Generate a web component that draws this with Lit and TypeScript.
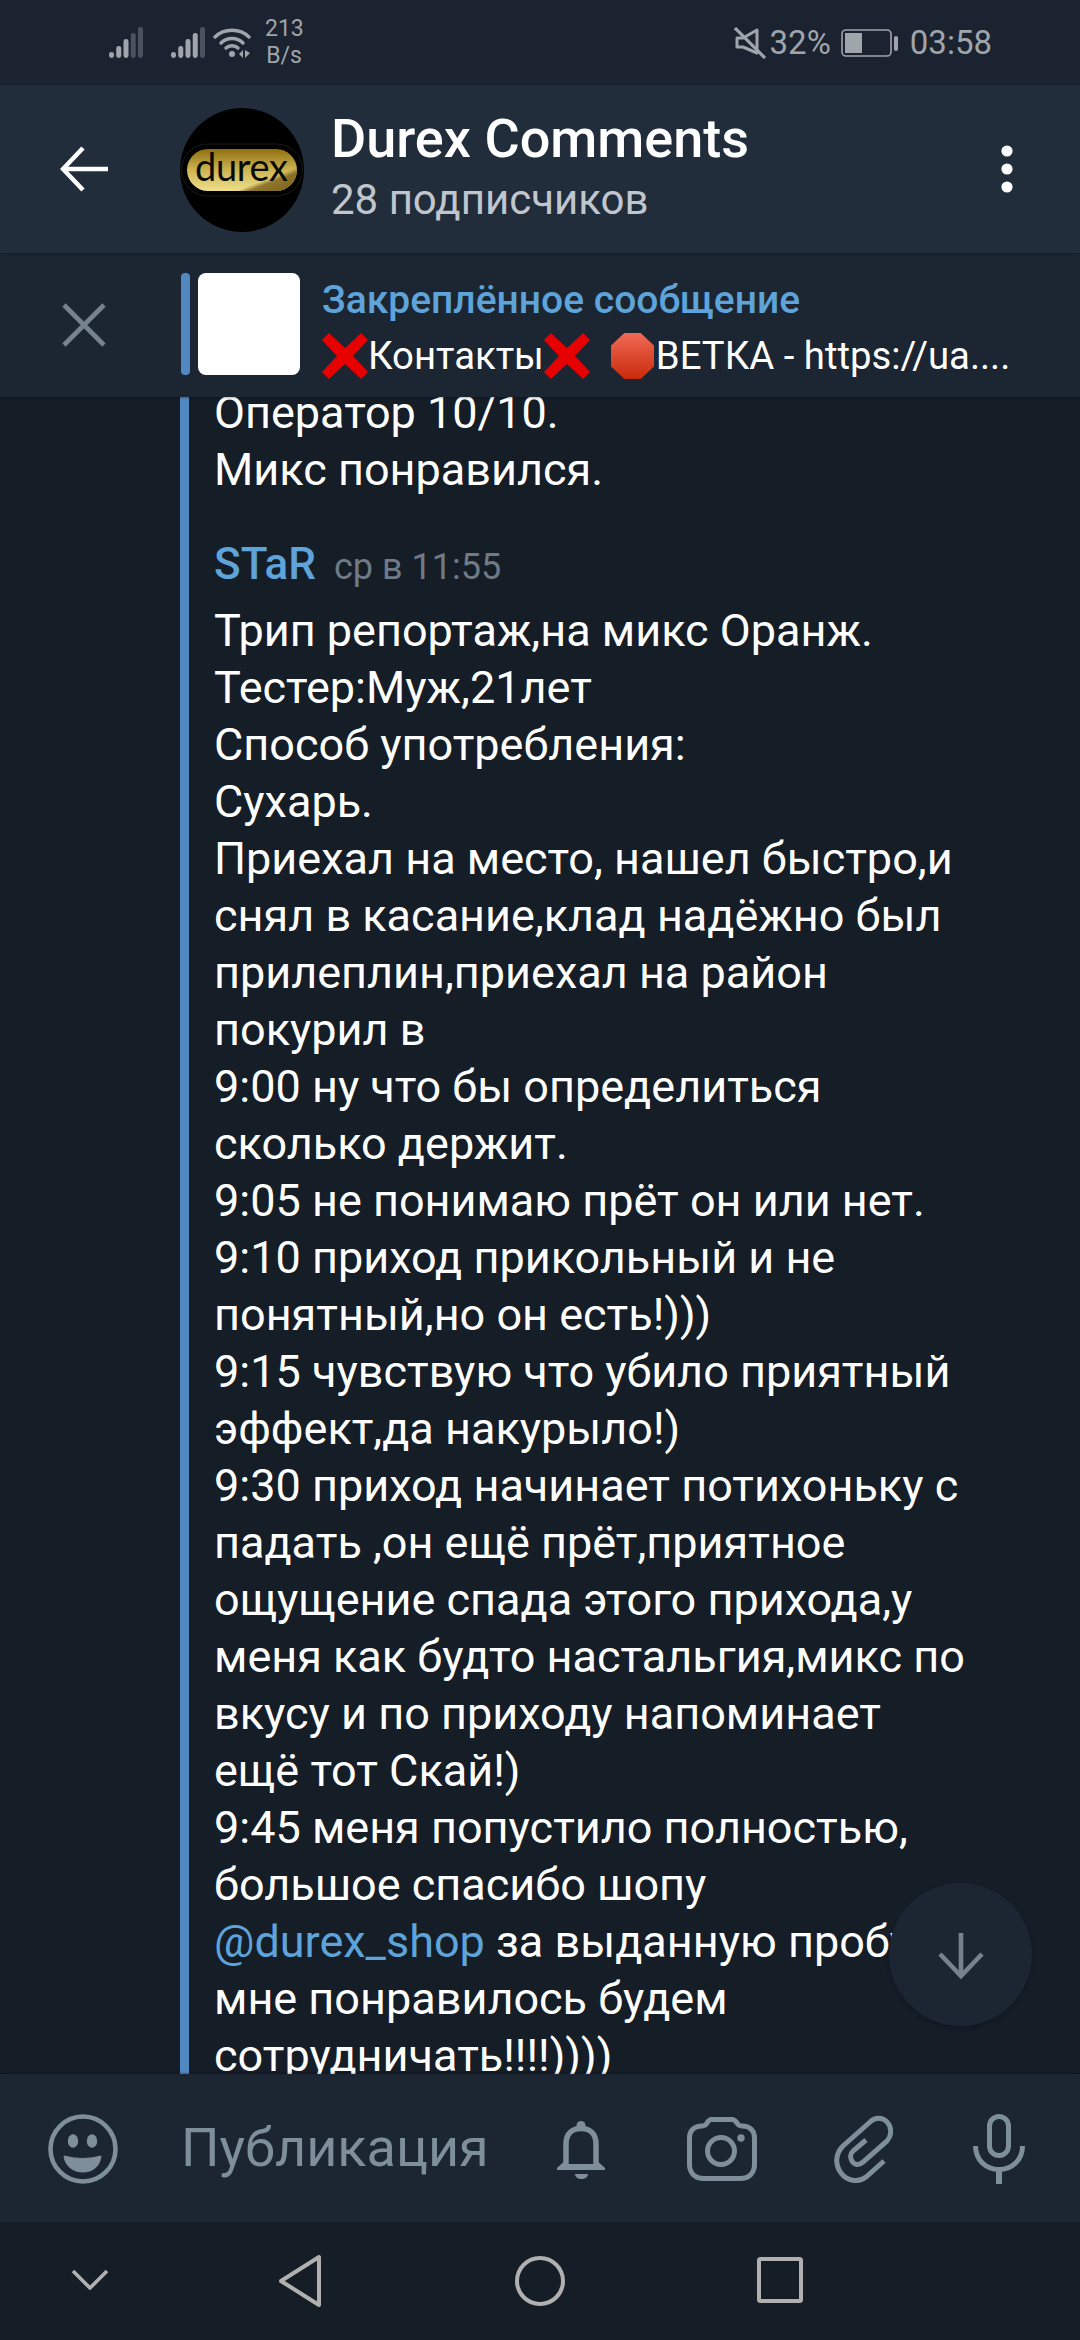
import { LitElement, html, css, svg } from "lit";
import { customElement } from "lit/decorators.js";

const cross = html`<svg class="emo" viewBox="2 2 40 40"><path d="M2 8 8 2 22 15 36 2 42 8 29 22 42 36 36 42 22 29 8 42 2 36 15 22Z" fill="#e60000"/></svg>`;
const stop = html`<svg class="emo stop" viewBox="1 1 42 44" preserveAspectRatio="none"><defs><linearGradient id="st" x1="0" y1="0" x2="0" y2="1"><stop offset="0" stop-color="#f06a55"/><stop offset="1" stop-color="#c92a0c"/></linearGradient></defs><path d="M14 1H30L43 13V33L30 45H14L1 33V13Z" fill="url(#st)"/></svg>`;

const lines = [
  "Приехал на место, нашел быстро,и",
  "снял в касание,клад надёжно был",
  "прилеплин,приехал на район",
  "покурил в",
  "9:00 ну что бы определиться",
  "сколько держит.",
  "9:05 не понимаю прёт он или нет.",
  "9:10 приход прикольный и не",
  "понятный,но он есть!)))",
  "9:15 чувствую что убило приятный",
  "эффект,да накурыло!)",
  "9:30 приход начинает потихоньку с",
  "падать ,он ещё прёт,приятное",
  "ощущение спада этого прихода,у",
  "меня как будто настальгия,микс по",
  "вкусу и по приходу напоминает",
  "ещё тот Скай!)",
  "9:45 меня попустило полностью,",
  "большое спасибо шопу",
];

function sig(lit: number) {
  const hs = [6, 12, 19, 25, 31];
  return html`<svg width="34" height="32" viewBox="0 0 34 32">${hs.map(
    (h, i) => svg`<rect x=${i * 7.25} y=${31 - h} width="5" height=${h} rx="2.4" fill=${i < lit ? "#a0a5ac" : "#4a525e"}/>`
  )}</svg>`;
}

@customElement("app-root")
export class AppRoot extends LitElement {
  static styles = css`
    :host { display: flex; flex-direction: column; width: 1080px; height: 2340px; overflow: hidden; background: #151d27; color: #fff; font-family: Roboto, "Noto Sans", sans-serif; }
    .status { height: 85px; flex: none; background: #1a232f; display: flex; align-items: center; padding: 0 88px 0 109px; color: #a0a5ac; }
    .status svg { display: block; flex: none; }
    .sig2 { margin-left: 28px; }
    .wifi { margin-left: 8px; }
    .speed { margin-left: 14px; font-size: 23px; line-height: 27px; text-align: center; width: 38px; margin-top: -1px; }
    .sright { margin-left: auto; display: flex; align-items: center; font-size: 33px; }
    .pct { margin-left: 4px; }
    .batt { margin: 0 11px 0 10px; }
    .header { height: 168px; flex: none; background: #222d3c; display: flex; align-items: center; position: relative; z-index: 2; box-shadow: 0 1px 3px rgba(0,0,0,.25); }
    .back { margin-left: 60px; width: 50px; flex: none; }
    .avatar { margin-left: 70px; width: 124px; height: 124px; flex: none; margin-top: 2px; }
    .titles { margin-left: 27px; flex: 1; }
    .title { font-size: 54px; font-weight: 500; line-height: 60px; white-space: nowrap; margin-top: -6px; }
    .sub { font-size: 42px; color: #c0c6cd; line-height: 46px; margin-top: 8px; }
    .dots { flex: none; margin-right: 66px; }
    .pin { height: 144px; flex: none; background: #1c2632; display: flex; align-items: center; position: relative; z-index: 1; box-shadow: 0 1px 2px rgba(0,0,0,.3); }
    .pinx { margin-left: 62px; flex: none; }
    .pbar { width: 9px; height: 102px; background: #5288c1; border-radius: 4px; margin-left: 75px; margin-top: -2px; flex: none; }
    .thumb { width: 102px; height: 102px; margin-left: 8px; margin-top: -2px; background: #fff; border-radius: 8px; flex: none; }
    .ptext { margin-left: 22px; margin-top: 7px; }
    .ptitle { font-size: 39px; font-weight: 500; color: #5ea4da; line-height: 44px; white-space: nowrap; }
    .pmsg { font-size: 38.3px; line-height: 46px; margin-top: 11px; white-space: nowrap; display: flex; align-items: center; }
    .emo { width: 46px; height: 46px; flex: none; display: block; }
    .stop { width: 43px; margin-right: 2px; }
    .sp { width: 21px; }
    .chat { flex: 1; min-height: 0; position: relative; overflow: hidden; padding-left: 180px; }
    .quote { border-left: 9px solid #5288c1; padding-left: 25px; height: 100%; box-sizing: border-box; overflow: hidden; font-size: 45px; line-height: 57px; }
    .l { white-space: nowrap; }
    .first { margin-top: -13px; }
    .author { display: flex; align-items: baseline; margin-top: 38px; margin-bottom: 6px; }
    .name { font-size: 44px; font-weight: 500; color: #5ea4da; }
    .when { font-size: 36px; color: #6f7a86; margin-left: 18px; }
    .link { color: #5ea4da; }
    .fab { position: absolute; left: 889px; top: 1486px; width: 143px; height: 143px; border-radius: 50%; background: #1c2632; box-shadow: 0 2px 4px rgba(0,0,0,.2); display: flex; align-items: center; justify-content: center; }
    .input { height: 148px; flex: none; background: #1c2632; position: relative; box-shadow: 0 -1px 2px rgba(0,0,0,.3); }
    .ph { font-size: 54px; color: #7e8e9b; position: absolute; left: 181px; top: 44px; line-height: 60px; }
    .input svg { position: absolute; }
    .nav { height: 118px; flex: none; background: #151d27; position: relative; }
    .nav svg { position: absolute; }
  `;

  render() {
    const ic = "#7e8e9b";
    return html`
      <div class="status">
        ${sig(3)}
        <span class="sig2">${sig(4)}</span>
        <svg class="wifi" width="38" height="32" viewBox="0 0 38 32" fill="none" stroke="#a0a5ac" stroke-width="3.4" stroke-linecap="round">
          <path d="M2 10C11 1 27 1 36 10"/><path d="M8 16C14 10 24 10 30 16"/><path d="M13 21C16 18 22 18 25 21"/>
          <circle cx="19" cy="27" r="3" fill="#a0a5ac" stroke="none"/>
          <path d="M26 27 30 23V31Z M32 23V31L37 26Z" fill="#a0a5ac" stroke="none"/>
        </svg>
        <div class="speed">213<br />B/s</div>
        <div class="sright">
          <svg width="32" height="32" viewBox="0 0 32 32" fill="none" stroke="#a0a5ac" stroke-width="3">
            <path d="M3 11H9L23 3V26L9 20H3Z" stroke-linejoin="round"/><path d="M1 1 31 31" stroke-width="3.2"/>
          </svg>
          <span class="pct">32%</span>
          <svg class="batt" width="58" height="28" viewBox="0 0 58 28">
            <rect x="1" y="1" width="49" height="26" rx="4" fill="none" stroke="#a0a5ac" stroke-width="1.6"/>
            <rect x="4" y="4" width="17" height="20" fill="#a0a5ac"/>
            <rect x="53" y="7" width="4" height="15" rx="2" fill="#a0a5ac"/>
          </svg>
          <span>03:58</span>
        </div>
      </div>

      <div class="header">
        <svg class="back" width="50" height="46" viewBox="0 0 50 46" fill="none" stroke="#fff" stroke-width="4.5"><path d="M48 23H4"/><path d="M23 2 3 23 23 44"/></svg>
        <svg class="avatar" viewBox="0 0 124 124">
          <defs>
            <linearGradient id="gold" x1="0" y1="0" x2="0" y2="1"><stop offset="0" stop-color="#8f6f10"/><stop offset=".5" stop-color="#cdb452"/><stop offset="1" stop-color="#eee08c"/></linearGradient>
            <linearGradient id="shade" x1="0" y1="0" x2="1" y2="1"><stop offset=".72" stop-color="#7a5f18" stop-opacity="0"/><stop offset=".78" stop-color="#7a5f18" stop-opacity=".8"/><stop offset="1" stop-color="#7a5f18"/></linearGradient>
          </defs>
          <circle cx="62" cy="62" r="62" fill="#000"/>
          <rect x="1.5" y="36" width="121" height="52" rx="26" fill="none" stroke="#1a1a1a" stroke-width="1"/>
          <rect x="7" y="41" width="110" height="42" rx="21" fill="url(#gold)"/>
          <rect x="7" y="41" width="110" height="42" rx="21" fill="url(#shade)"/>
          <text x="61.5" y="73" text-anchor="middle" font-family="Lato, Roboto, sans-serif" font-size="38" fill="#0a0a05" textLength="93">durex</text>
        </svg>
        <div class="titles">
          <div class="title">Durex Comments</div>
          <div class="sub">28 подписчиков</div>
        </div>
        <svg class="dots" width="14" height="48" viewBox="0 0 14 48" fill="#fff"><circle cx="7" cy="6" r="5.6"/><circle cx="7" cy="24" r="5.6"/><circle cx="7" cy="42" r="5.6"/></svg>
      </div>

      <div class="pin">
        <svg class="pinx" width="44" height="44" viewBox="0 0 44 44" stroke="#76838f" stroke-width="4.6" fill="none"><path d="M2 2 42 42M42 2 2 42"/></svg>
        <div class="pbar"></div>
        <div class="thumb"></div>
        <div class="ptext">
          <div class="ptitle">Закреплённое сообщение</div>
          <div class="pmsg">${cross}<span>Контакты</span>${cross}<span class="sp"></span>${stop}<span>ВЕТКА - https://ua....</span></div>
        </div>
      </div>

      <div class="chat">
        <div class="quote">
          <div class="l first">Оператор 10/10.</div>
          <div class="l">Микс понравился.</div>
          <div class="author"><span class="name">STaR</span><span class="when">ср в 11:55</span></div>
          <div class="l">Трип репортаж,на микс Оранж.</div>
          <div class="l">Тестер:Муж,21лет</div>
          <div class="l">Способ употребления:</div>
          <div class="l">Сухарь.</div>
          ${lines.map((t) => html`<div class="l">${t}</div>`)}
          <div class="l"><span class="link">@durex_shop</span> за выданную пробу,</div>
          <div class="l">мне понравилось будем</div>
          <div class="l">сотрудничать!!!!))))</div>
        </div>
        <div class="fab">
          <svg width="48" height="48" viewBox="0 0 48 48" fill="none" stroke="#76838f" stroke-width="4.6"><path d="M24 2V44"/><path d="M3 23 24 45 45 23"/></svg>
        </div>
      </div>

      <div class="input">
        <svg style="left:48px;top:40px" width="70" height="70" viewBox="0 0 70 70">
          <circle cx="35" cy="35" r="32.5" fill="none" stroke=${ic} stroke-width="4.6"/>
          <ellipse cx="25" cy="27" rx="5.2" ry="6.8" fill=${ic}/><ellipse cx="44" cy="27" rx="5.2" ry="6.8" fill=${ic}/>
          <path d="M16 42Q35 47 53 42C52 52 45 58 35 58S17 52 16 42Z" fill=${ic} stroke=${ic} stroke-width="1" stroke-linejoin="round"/>
        </svg>
        <div class="ph">Публикация</div>
        <svg style="left:557px;top:47px" width="48" height="58" viewBox="0 0 48 58">
          <circle cx="24" cy="4.5" r="4.5" fill=${ic}/>
          <path d="M9 45V23C9 12 16 7.5 24 7.5S39 12 39 23V45" fill="none" stroke=${ic} stroke-width="5.5"/>
          <path d="M0 49V47L6.5 41V43H41.5V41L48 47V49Z" fill=${ic}/>
          <path d="M18 53H31C31 56 28 58 24.500 58S18 56 18 53Z" fill=${ic}/>
        </svg>
        <svg style="left:687px;top:43px" width="70" height="64" viewBox="0 0 70 64" fill="none" stroke=${ic} stroke-width="5">
          <path d="M24 2.500H45C47 2.500 48 3 50 6 51 8 53 9 55 9 63 9 67.500 14 67.500 21V47C67.500 56 62 61.500 53 61.500H17C8 61.500 2.500 56 2.500 47V21C2.500 14 7 9 15 9 17 9 19 8 20 6 22 3 23 2.500 24 2.500Z"/>
          <circle cx="34" cy="34" r="13.500"/>
          <circle cx="54" cy="21" r="3.700" fill=${ic} stroke="none"/>
        </svg>
        <svg style="left:834px;top:41px" width="59" height="68" viewBox="0 0 59 68" fill="none" stroke=${ic} stroke-width="5">
          <path d="M50 46 32 62C24 68 13 66 7 58 1 50 1 39 9 31L36 7C41 2 49 2 53 7 58 12 58 20 53 26L29 47C25 51 20 50 18 46 16 43 16 39 19 36L32 25"/>
        </svg>
        <svg style="left:973px;top:40px" width="52" height="70" viewBox="0 0 52 70" fill="none" stroke=${ic} stroke-width="5">
          <rect x="16.500" y="2.500" width="19" height="39" rx="9.500"/>
          <path d="M2.500 32C2.500 46 13 55.500 26 55.500S49.500 46 49.500 32"/>
          <path d="M26 55V70" stroke-width="6"/>
        </svg>
      </div>

      <div class="nav">
        <svg style="left:71px;top:46px" width="38" height="24" viewBox="0 0 38 24" fill="none" stroke="#b0b0b0" stroke-width="3.6" stroke-linejoin="round"><path d="M2 3 19 20 36 3"/></svg>
        <svg style="left:277px;top:32px" width="46" height="54" viewBox="0 0 46 54" fill="none" stroke="#b0b0b0" stroke-width="4" stroke-linejoin="round"><path d="M42 3V51L4 27Z"/></svg>
        <svg style="left:515px;top:34px" width="50" height="50" viewBox="0 0 50 50" fill="none" stroke="#b0b0b0" stroke-width="4"><circle cx="25" cy="25" r="23"/></svg>
        <svg style="left:757px;top:35px" width="46" height="46" viewBox="0 0 46 46" fill="none" stroke="#b0b0b0" stroke-width="4" stroke-linejoin="round"><rect x="2" y="2" width="42" height="42" rx="1.5"/></svg>
      </div>
    `;
  }
}
